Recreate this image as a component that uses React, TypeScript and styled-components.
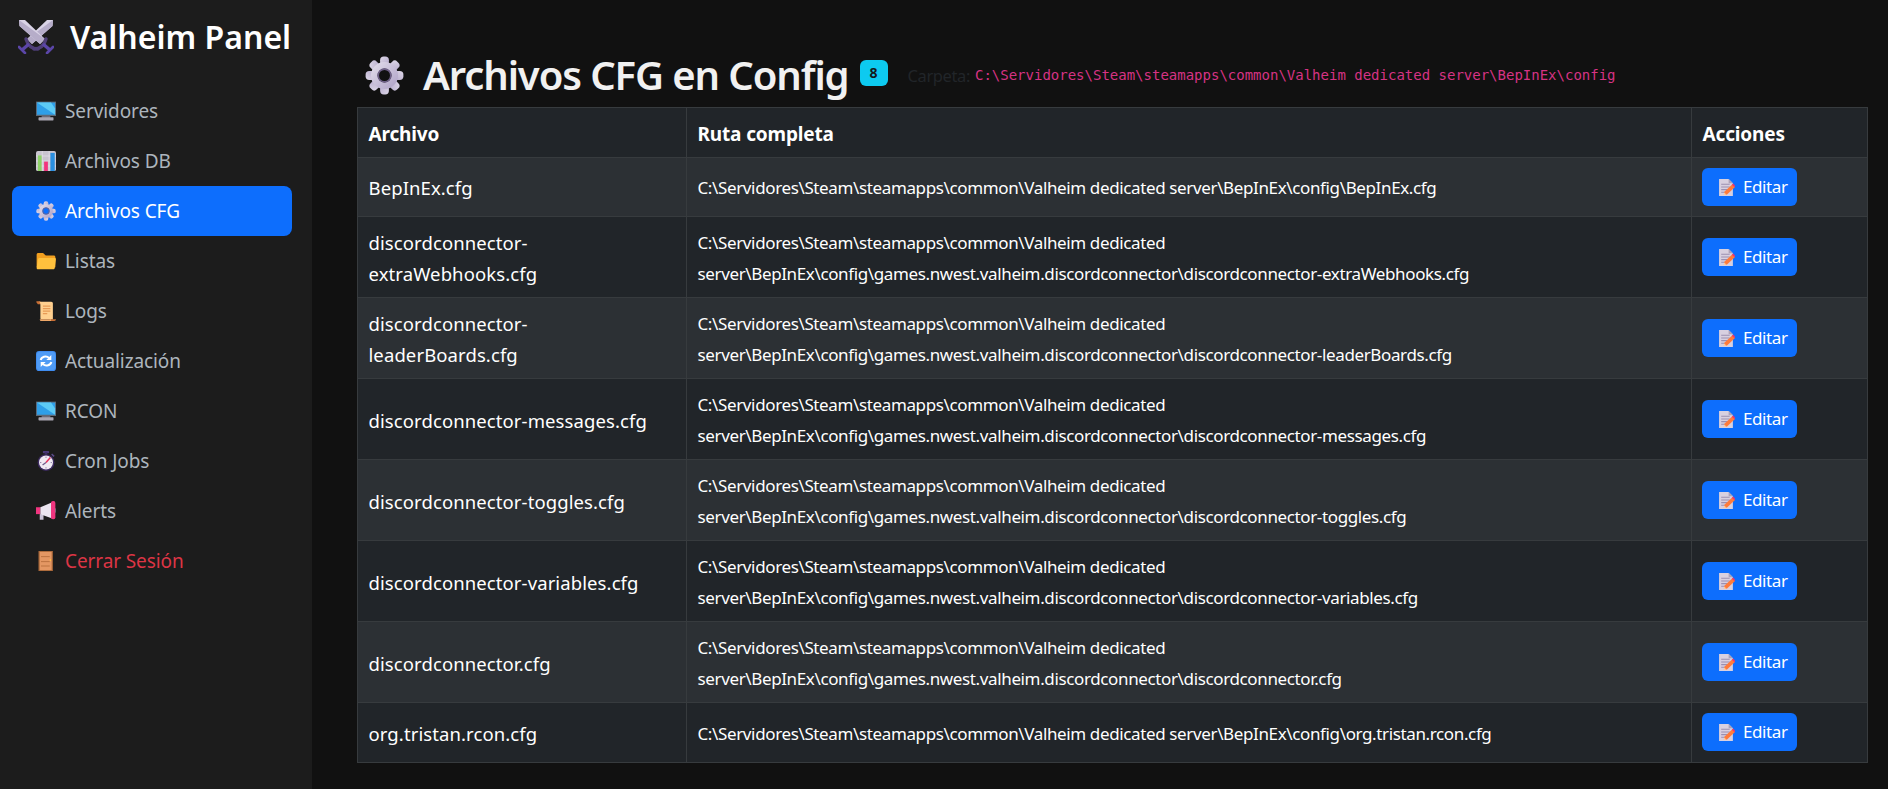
import React from "react";
import styled, { createGlobalStyle } from "styled-components";

const Global = createGlobalStyle`
  html, body { margin: 0; height: 100%; background: #111111; overflow: hidden; }
  #root { height: 100%; }
  * { box-sizing: border-box; }
  body { font-family: "Noto Sans", "Open Sans", sans-serif; color: #fff; }
`;

const Shell = styled.div`
  display: flex;
  height: 789px;
`;
const Sidebar = styled.aside`
  width: 312px;
  flex: none;
  background: #1c1c1c;
  padding: 12px 20px 0 12px;
`;
const Brand = styled.div`
  display: flex;
  align-items: center;
  height: 48px;
  padding-left: 6px;
  gap: 16px;
  font-size: 32px;
  font-weight: 600;
  letter-spacing: 0;
  color: #fff;
  margin-bottom: 26px;
  white-space: nowrap;
`;
const Nav = styled.nav`
  display: flex;
  flex-direction: column;
`;
const NavItem = styled.a<{ $active?: boolean; $danger?: boolean }>`
  display: flex;
  align-items: center;
  gap: 9px;
  height: 50px;
  padding-left: 24px;
  border-radius: 8px;
  font-size: 19px;
  letter-spacing: -0.1px;
  background: ${(p) => (p.$active ? "#0d6efd" : "transparent")};
  color: ${(p) => (p.$active ? "#ffffff" : p.$danger ? "#dc3545" : "#adb5bd")};
`;
const Main = styled.main`
  flex: 1;
  min-width: 0;
  padding: 51px 21px 0 45px;
`;
const Heading = styled.div`
  display: flex;
  align-items: center;
  height: 48px;
  padding-left: 8px;
  margin-bottom: 8px;
  white-space: nowrap;
`;
const Title = styled.h1`
  margin: 0 0 0 19px;
  font-size: 40px;
  line-height: 48px;
  font-weight: 600;
  letter-spacing: -1.1px;
  color: #f1f1f1;
`;
const Badge = styled.span`
  display: inline-flex;
  align-items: center;
  justify-content: center;
  width: 28px;
  height: 26px;
  margin: -5px 0 0 11px;
  border-radius: 6px;
  background: #0dcaf0;
  color: #14181c;
  font-size: 14px;
  font-weight: 700;
`;
const Folder = styled.span`
  margin-left: 20px;
  font-size: 16.5px;
  letter-spacing: -0.4px;
  color: #212529;
`;
const FolderPath = styled.code`
  margin-left: 5px;
  font-family: "DejaVu Sans Mono", monospace;
  font-size: 14px;
  color: #d63384;
`;
const Table = styled.table`
  width: 1510px;
  table-layout: fixed;
  border-collapse: collapse;
  line-height: 30.4px;
`;
const Th = styled.th`
  padding: 10.6px 10.5px 8.2px;
  text-align: left;
  font-weight: 700;
  font-size: 19px;
  letter-spacing: -0.15px;
  color: #fff;
  background: #212529;
  border: 1px solid #373b3e;
`;
const Row = styled.tr<{ $odd: boolean }>`
  background: ${(p) => (p.$odd ? "#2c3034" : "#212529")};
`;
const NameCell = styled.td`
  padding: 11px 14px 8.2px 10.5px;
  font-size: 18.5px;
  letter-spacing: 0.1px;
  color: #fff;
  border: 1px solid #373b3e;
  vertical-align: middle;
`;
const PathCell = styled(NameCell)`
  padding-right: 10.5px;
  font-size: 17px;
  letter-spacing: -0.37px;
  overflow-wrap: break-word;
`;
const ActionCell = styled(NameCell)`
  padding: 9.6px 10px 10.6px;
`;
const EditButton = styled.button`
  display: inline-block;
  width: 95px;
  height: 38px;
  padding: 0 0 0 16px;
  border: none;
  border-radius: 6px;
  background: #0d6efd;
  color: #fff;
  font-family: inherit;
  font-size: 17px;
  letter-spacing: -0.4px;
  text-align: left;
  line-height: 38px;
  white-space: nowrap;
`;
const ButtonIcon = styled.span`
  display: inline-flex;
  vertical-align: -3px;
  margin-right: 8px;
`;

const Ico = styled.svg`
  flex: none;
  display: block;
`;

type P = { s?: number };

const Swords = ({ s = 36 }: P) => {
  const one = (
    <>
      <path d="M1 2 L7 2 L27 21 L22 26 L1.5 8 Z" fill="#d9d3e6" />
      <path d="M1 2 L27 21 L22 26 L1.5 8 Z" fill="#b6adc9" />
      <path d="M16 31 C21 31 26 28 28 21" fill="none" stroke="#4f3f78" strokeWidth="3.4" strokeLinecap="round" />
      <path d="M25 26 L32 32" stroke="#5b46a8" strokeWidth="3.4" />
      <path d="M29 35 L35 29" stroke="#5b46a8" strokeWidth="2.6" strokeLinecap="round" />
    </>
  );
  return (
    <Ico width={s} height={s} viewBox="0 0 36 36">
      <g transform="translate(36 0) scale(-1 1)">{one}</g>
      {one}
    </Ico>
  );
};

const Desktop = ({ s = 20 }: P) => (
  <Ico width={s} height={s} viewBox="0 0 32 32">
    <rect x="9" y="22" width="14" height="5" fill="#6d6a78" />
    <rect x="4" y="26" width="24" height="5" rx="1" fill="#a9a6b2" />
    <rect x="0" y="1" width="32" height="23" fill="#5d6a78" />
    <path d="M1.5 2.5 H30.5 V22 H1.5 Z" fill="#2f9fe8" />
    <path d="M1.5 2.5 H24 L30.5 12 V22 Z" fill="#5ccbf5" />
  </Ico>
);

const Chart = ({ s = 20 }: P) => (
  <Ico width={s} height={s} viewBox="0 0 32 32">
    <rect x="0" y="0" width="32" height="32" rx="3" fill="#c9c4cf" />
    <path d="M0 8 H32 M0 16 H32 M0 24 H32 M10 0 V32 M21 0 V32" stroke="#e8e4ec" strokeWidth="1" />
    <rect x="3" y="7" width="6" height="25" fill="#8ed268" />
    <rect x="13" y="17" width="6" height="15" fill="#f2357e" />
    <rect x="23" y="3" width="7" height="29" fill="#2a8fe0" />
  </Ico>
);

const Gear = ({ s = 20 }: P) => {
  const teeth = [0, 45, 90, 135, 180, 225, 270, 315];
  return (
    <Ico width={s} height={s} viewBox="0 0 32 32">
      <defs>
        <linearGradient id={`g${s}`} x1="0" y1="0" x2="1" y2="1">
          <stop offset="0" stopColor="#ded8e8" />
          <stop offset="1" stopColor="#b3a7ca" />
        </linearGradient>
      </defs>
      {teeth.map((a) => (
        <rect key={a} x="12.4" y="0.5" width="7.2" height="9" rx="3" fill={`url(#g${s})`} transform={`rotate(${a} 16 16)`} />
      ))}
      <circle cx="16" cy="16" r="8.4" fill="none" stroke={`url(#g${s})`} strokeWidth="5.4" />
      <circle cx="16" cy="16" r="5.2" fill="none" stroke="#6f6188" strokeWidth="1.4" />
    </Ico>
  );
};

const FolderIcon = ({ s = 20 }: P) => (
  <Ico width={s} height={s} viewBox="0 0 32 32">
    <path d="M1 6 C1 4 2 3 4 3 H11 C13 3 14 7 16 7 H28 C30 7 31 8 31 10 V26 H1 Z" fill="#f29f1f" />
    <path d="M3 13 C3.5 11.5 5 11 6 11 H30 C31.5 11 32 12 31.8 13.5 L30 27 C29.7 28.5 29 29 27.5 29 H3 C1.5 29 1 28 1 27 Z" fill="#ffc13d" />
  </Ico>
);

const Scroll = ({ s = 20 }: P) => (
  <Ico width={s} height={s} viewBox="0 0 32 32">
    <path d="M0 1 C3 0 7 0 9 3 V5 H3 Z" fill="#c96f35" />
    <path d="M22 29 H32 C32 31 30 32 28 32 H22 Z" fill="#c96f35" />
    <path d="M4 1 H24 C27 1 27 3 27 4 V29 H8 C7 29 7 27 7 25 V5 C7 3 6 1 4 1 Z" fill="#ffd08f" />
    <path d="M11 8 H23 M11 12 H23 M11 16 H23 M11 20 H18" stroke="#e79a56" strokeWidth="2" />
    <path d="M6 29 H24 V32 H9 C7 32 6 31 6 29 Z" fill="#f0a868" />
  </Ico>
);

const Refresh = ({ s = 20 }: P) => (
  <Ico width={s} height={s} viewBox="0 0 32 32">
    <rect width="32" height="32" rx="5" fill="#3f8cf0" />
    <rect x="1.5" y="1.5" width="29" height="29" rx="4" fill="#4f9bf5" />
    <path d="M7.5 14.5 C8.5 9.5 16 6.5 21 11" fill="none" stroke="#fff" strokeWidth="3.2" />
    <path d="M24.5 6.5 V14.5 H16.5 Z" fill="#fff" />
    <path d="M24.5 17.5 C23.5 22.5 16 25.5 11 21" fill="none" stroke="#fff" strokeWidth="3.2" />
    <path d="M7.5 25.5 V17.5 H15.5 Z" fill="#fff" />
  </Ico>
);

const Stopwatch = ({ s = 20 }: P) => (
  <Ico width={s} height={s} viewBox="0 0 32 32">
    <rect x="11" y="0" width="10" height="3.5" rx="1" fill="#4b3a7a" />
    <rect x="14" y="2" width="4" height="4" fill="#3d2f66" />
    <path d="M25 5 L29 8.5" stroke="#5a4a88" strokeWidth="2.4" />
    <circle cx="16" cy="18.5" r="13.5" fill="#3b2a5e" />
    <circle cx="16" cy="18.5" r="11.2" fill="#efe9f2" />
    <path d="M16 18.5 L23 10.5" stroke="#e5305c" strokeWidth="2.4" />
    <path d="M16 18.5 L10.5 22.5" stroke="#6b5a88" strokeWidth="2" />
    <path d="M16 9 V11 M16 26 V28 M6.5 18.5 H8.5 M23.5 18.5 H25.5" stroke="#7b6b98" strokeWidth="1.4" />
  </Ico>
);

const Megaphone = ({ s = 20 }: P) => (
  <Ico width={s} height={s} viewBox="0 0 32 32">
    <rect x="6" y="21" width="6" height="9" fill="#c9c2d6" />
    <path d="M0 10 H7 V21 H0 Z" fill="#f0357f" />
    <path d="M7 10 L26 2 V28 L7 21 Z" fill="#ebe5f0" />
    <rect x="24" y="0" width="7" height="29" rx="3" fill="#f0357f" />
    <path d="M31 11 C33 13 33 17 31 19 Z" fill="#8f8a9a" />
  </Ico>
);

const Door = ({ s = 20 }: P) => (
  <Ico width={s} height={s} viewBox="0 0 32 32">
    <rect x="4" y="0" width="23" height="32" fill="#a9683a" />
    <rect x="6" y="1.5" width="19" height="29" fill="#e49763" />
    <path d="M8 9 H22 M8 17 H22 M8 24 H22" stroke="#bb7240" strokeWidth="1.6" />
    <rect x="22" y="13" width="2" height="3" fill="#ffc13d" />
  </Ico>
);

const Memo = ({ s = 17 }: P) => (
  <Ico width={s} height={s} viewBox="0 0 32 32">
    <path d="M2 0 H20 L28 8 V32 H2 Z" fill="#d8d0e0" />
    <path d="M20 0 L28 8 H20 Z" fill="#aaa0b8" />
    <path d="M6 10 H22 M6 15 H22 M6 20 H18 M6 25 H13" stroke="#9b8fb0" strokeWidth="2" />
    <path d="M11 30 L12 24 L27 10 L32 15 L17 29 Z" fill="#ff7b3a" />
    <path d="M26 11 L28.5 8.5 L33 13 L31 15.5 Z" fill="#f0386b" />
    <path d="M11 30 L12 25.5 L15.5 29 Z" fill="#ffd8a8" />
  </Ico>
);

const navItems: { label: string; icon: React.ReactNode; active?: boolean; danger?: boolean }[] = [
  { label: "Servidores", icon: <Desktop /> },
  { label: "Archivos DB", icon: <Chart /> },
  { label: "Archivos CFG", icon: <Gear />, active: true },
  { label: "Listas", icon: <FolderIcon /> },
  { label: "Logs", icon: <Scroll /> },
  { label: "Actualización", icon: <Refresh /> },
  { label: "RCON", icon: <Desktop /> },
  { label: "Cron Jobs", icon: <Stopwatch /> },
  { label: "Alerts", icon: <Megaphone /> },
  { label: "Cerrar Sesión", icon: <Door />, danger: true },
];

const base = "C:\\Servidores\\Steam\\steamapps\\common\\Valheim dedicated server\\BepInEx\\config\\";
const dc = base + "games.nwest.valheim.discordconnector\\";
const files: [string, string][] = [
  ["BepInEx.cfg", base + "BepInEx.cfg"],
  ["discordconnector-extraWebhooks.cfg", dc + "discordconnector-extraWebhooks.cfg"],
  ["discordconnector-leaderBoards.cfg", dc + "discordconnector-leaderBoards.cfg"],
  ["discordconnector-messages.cfg", dc + "discordconnector-messages.cfg"],
  ["discordconnector-toggles.cfg", dc + "discordconnector-toggles.cfg"],
  ["discordconnector-variables.cfg", dc + "discordconnector-variables.cfg"],
  ["discordconnector.cfg", dc + "discordconnector.cfg"],
  ["org.tristan.rcon.cfg", base + "org.tristan.rcon.cfg"],
];

export default function App() {
  return (
    <Shell>
      <Global />
      <Sidebar>
        <Brand>
          <Swords />
          Valheim Panel
        </Brand>
        <Nav>
          {navItems.map((n) => (
            <NavItem key={n.label} $active={n.active} $danger={n.danger}>
              {n.icon}
              {n.label}
            </NavItem>
          ))}
        </Nav>
      </Sidebar>
      <Main>
        <Heading>
          <Gear s={39} />
          <Title>Archivos CFG en Config</Title>
          <Badge>8</Badge>
          <Folder>Carpeta:</Folder>
          <FolderPath>C:\Servidores\Steam\steamapps\common\Valheim dedicated server\BepInEx\config</FolderPath>
        </Heading>
        <Table>
          <colgroup>
            <col style={{ width: 329 }} />
            <col style={{ width: 1005 }} />
            <col style={{ width: 176 }} />
          </colgroup>
          <thead>
            <tr>
              <Th>Archivo</Th>
              <Th>Ruta completa</Th>
              <Th>Acciones</Th>
            </tr>
          </thead>
          <tbody>
            {files.map(([name, path], i) => (
              <Row key={name} $odd={i % 2 === 0}>
                <NameCell>{name}</NameCell>
                <PathCell>{path}</PathCell>
                <ActionCell>
                  <EditButton>
                    <ButtonIcon>
                      <Memo />
                    </ButtonIcon>
                    Editar
                  </EditButton>
                </ActionCell>
              </Row>
            ))}
          </tbody>
        </Table>
      </Main>
    </Shell>
  );
}
